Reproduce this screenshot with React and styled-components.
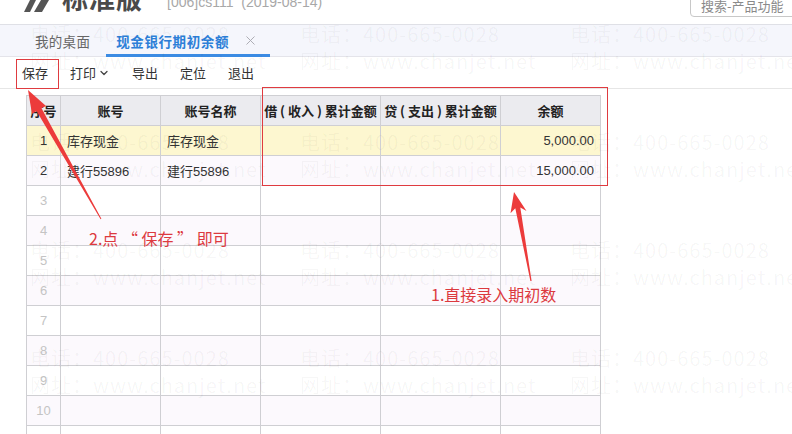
import React from 'react'
import styled, { createGlobalStyle } from 'styled-components'
import { ChevronDown, X } from 'lucide-react'

const GlobalStyle = createGlobalStyle`
  html, body { margin: 0; padding: 0; background: #fff; }
  body { font-family: "Liberation Sans", "Noto Sans CJK SC", sans-serif; }
`

const Page = styled.div`
  position: relative;
  width: 792px;
  height: 434px;
  overflow: hidden;
  display: flex;
  flex-direction: column;
  background: #fff;
`

const TopBar = styled.div`
  height: 24px;
  display: flex;
  align-items: flex-end;
  overflow: hidden;
  flex-shrink: 0;
`

const Logo = styled.svg`
  width: 30px;
  height: 24px;
  margin-left: 22px;
  flex-shrink: 0;
`

const Edition = styled.div`
  font-family: "Noto Sans CJK SC", sans-serif;
  font-size: 26px;
  font-weight: 700;
  color: #4a4a4a;
  line-height: 26px;
  margin: 0 0 13px 10px;
  letter-spacing: 1px;
`

const Meta = styled.div`
  font-size: 14px;
  color: #a8a8a8;
  line-height: 16px;
  margin: 0 0 14px 24px;
  white-space: pre;
`

const Search = styled.div`
  margin-left: auto;
  align-self: flex-start;
  width: 110px;
  height: 22px;
  margin-top: -5px;
  margin-right: -8px;
  border: 1px solid #c8c8c8;
  border-radius: 4px;
  box-sizing: border-box;
  padding: 0 10px;
  font-family: "Noto Sans CJK SC", sans-serif;
  font-size: 13px;
  line-height: 20px;
  color: #8a8a8a;
  white-space: nowrap;
  overflow: hidden;
`

const TabBar = styled.div`
  height: 33px;
  box-sizing: border-box;
  border-top: 1px solid #dfe0e6;
  border-bottom: 1px solid #e4e4ea;
  background: #f5f6fc;
  display: flex;
  align-items: stretch;
  padding-left: 35px;
  flex-shrink: 0;
`

const Tab = styled.div`
  display: flex;
  align-items: center;
  gap: 14px;
  padding: ${({ $active }) => ($active ? '0 12px 0 10px' : '0 16px 0 0')};
  font-family: "Noto Sans CJK SC", sans-serif;
  font-size: 13.5px;
  letter-spacing: ${({ $active }) => ($active ? '0.6px' : '0.3px')};
  font-weight: ${({ $active }) => ($active ? 700 : 400)};
  color: ${({ $active }) => ($active ? '#2d7fd8' : '#666')};
  border-bottom: 3px solid ${({ $active }) => ($active ? '#3b8be3' : 'transparent')};
  margin-bottom: -1px;
  position: relative;
  padding-top: 2px;
  & + &::before {
    content: '';
    position: absolute;
    left: 0;
    top: 8px;
    bottom: 5px;
    border-left: 1px solid #dadbe3;
  }
`

const Toolbar = styled.div`
  height: 32px;
  box-sizing: border-box;
  border-bottom: 1px solid #e6e6e6;
  display: flex;
  align-items: center;
  gap: 22px;
  padding-left: 22px;
  flex-shrink: 0;
`

const ToolButton = styled.div`
  display: flex;
  align-items: center;
  gap: 2px;
  font-family: "Noto Sans CJK SC", sans-serif;
  font-size: 13px;
  color: #333;
`

const Content = styled.div`
  padding: 6px 0 0 26px;
  flex: 1;
`

const Grid = styled.table`
  border-collapse: collapse;
  table-layout: fixed;
  width: 575px;
`

const Head = styled.th`
  height: 29px;
  padding: 0;
  border: 1px solid #cfcfd3;
  background: #ebebef;
  font-family: "Noto Sans CJK SC", sans-serif;
  font-size: 13px;
  font-weight: 700;
  color: #222;
  text-align: center;
  white-space: nowrap;
  overflow: hidden;
`

const Row = styled.tr`
  background: ${({ $tone }) => ($tone === 'sel' ? '#fdf7d0' : $tone === 'alt' ? '#fcf9fd' : '#fff')};
`

const Cell = styled.td`
  height: 29px;
  padding: 0 6px;
  border: 1px solid #cfcfd3;
  font-family: "Liberation Sans", "Noto Sans CJK SC", sans-serif;
  font-size: 13px;
  color: ${({ $muted }) => ($muted ? '#c4c4c4' : '#333')};
  text-align: ${({ $align }) => $align || 'left'};
  white-space: nowrap;
  overflow: hidden;
`

const Watermarks = styled.div`
  position: absolute;
  inset: 0;
  pointer-events: none;
  display: grid;
  grid-template-columns: repeat(3, 270px);
  grid-auto-rows: 108px;
  padding: 20px 0 0 30px;
`

const Mark = styled.div`
  font-family: "Noto Sans CJK SC", sans-serif;
  font-size: 20px;
  line-height: 27px;
  color: rgba(0, 0, 0, 0.045);
  white-space: nowrap;
  letter-spacing: 1px;
`

const Notes = styled.svg`
  position: absolute;
  inset: 0;
  pointer-events: none;
`

const NoteText = styled.div`
  position: absolute;
  left: ${({ $x }) => $x}px;
  top: ${({ $y }) => $y}px;
  font-family: "Noto Sans CJK SC", sans-serif;
  font-size: 16px;
  line-height: 20px;
  color: #dc3a3f;
  white-space: nowrap;
`

const rows = [
  { no: 1, code: '库存现金', name: '库存现金', bal: '5,000.00' },
  { no: 2, code: '建行55896', name: '建行55896', bal: '15,000.00' },
  ...Array.from({ length: 9 }, (_, i) => ({ no: i + 3 }))
]

export default function App () {
  return (
    <Page>
      <GlobalStyle />
      <TopBar>
        <Logo viewBox='0 0 30 24'>
          <polygon points='2,12 8,12 14,0 8,0' fill='#555' />
          <polygon points='12,12 20,12 27,0 19,0' fill='#555' />
        </Logo>
        <Edition>标准版</Edition>
        <Meta>[006]cs111  (2019-08-14)</Meta>
        <Search>搜索-产品功能</Search>
      </TopBar>

      <TabBar>
        <Tab>我的桌面</Tab>
        <Tab $active>
          现金银行期初余额
          <X size={15} color='#a9a9b0' strokeWidth={1.5} />
        </Tab>
      </TabBar>

      <Toolbar>
        <ToolButton>保存</ToolButton>
        <ToolButton>打印<ChevronDown size={12} strokeWidth={2.5} color='#444' /></ToolButton>
        <ToolButton>导出</ToolButton>
        <ToolButton>定位</ToolButton>
        <ToolButton>退出</ToolButton>
      </Toolbar>

      <Content>
        <Grid>
          <colgroup>
            <col style={{ width: 34 }} />
            <col style={{ width: 100 }} />
            <col style={{ width: 100 }} />
            <col style={{ width: 120 }} />
            <col style={{ width: 120 }} />
            <col style={{ width: 100 }} />
          </colgroup>
          <thead>
            <tr>
              <Head>序号</Head>
              <Head>账号</Head>
              <Head>账号名称</Head>
              <Head>借 ( 收入 ) 累计金额</Head>
              <Head>贷 ( 支出 ) 累计金额</Head>
              <Head>余额</Head>
            </tr>
          </thead>
          <tbody>
            {rows.map((r) => (
              <Row key={r.no} $tone={r.no === 1 ? 'sel' : r.no % 2 === 0 ? 'alt' : ''}>
                <Cell $align='center' $muted={!r.code}>{r.no}</Cell>
                <Cell>{r.code}</Cell>
                <Cell>{r.name}</Cell>
                <Cell />
                <Cell />
                <Cell $align='right'>{r.bal}</Cell>
              </Row>
            ))}
          </tbody>
        </Grid>
      </Content>

      <Watermarks>
        {Array.from({ length: 12 }, (_, i) => (
          <Mark key={i}>
            <div>电话：400-665-0028</div>
            <div>网址：www.chanjet.net</div>
          </Mark>
        ))}
      </Watermarks>

      <Notes viewBox='0 0 792 434' width='792' height='434'>
        <rect x='16.5' y='59.5' width='42' height='29' fill='none' stroke='#df3b40' strokeWidth='1' />
        <rect x='262.5' y='87.5' width='345' height='98' fill='none' stroke='#df3b40' strokeWidth='1' />
        <polygon
          points='28,90 46,106 41.5,108.2 101.4,218.8 100.6,219.2 36.5,111 32,114'
          fill='#ec3b3b'
        />
        <polygon
          points='514,192 526.5,211 520.3,207.5 531.6,281 530.4,281.1 515.3,208.2 510.5,213.2'
          fill='#ec3b3b'
        />
      </Notes>

      <NoteText $x={89} $y={228}>2.点 “ 保存 ” 即可</NoteText>
      <NoteText $x={431} $y={284}>1.直接录入期初数</NoteText>
    </Page>
  )
}
